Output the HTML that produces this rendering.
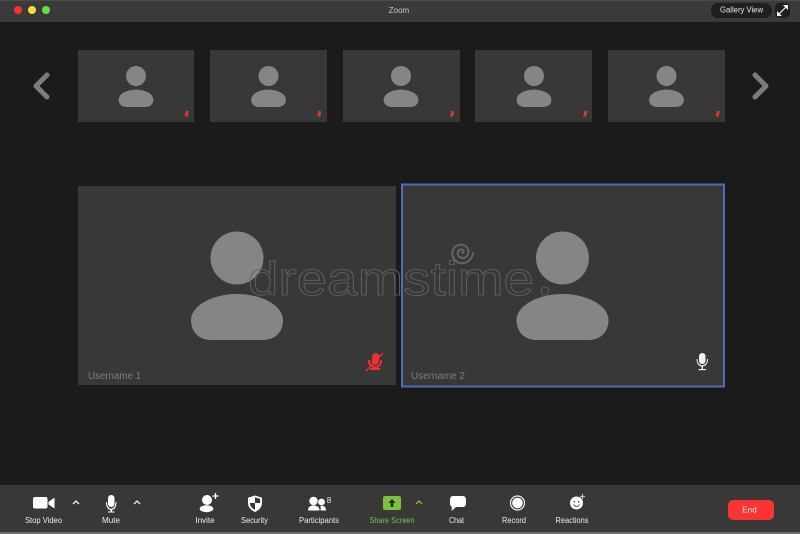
<!DOCTYPE html>
<html><head><meta charset="utf-8"><style>
html,body{margin:0;padding:0;background:#1b1b1b}
svg{display:block}
text{font-family:"Liberation Sans",sans-serif}
</style></head><body>
<svg width="800" height="534" viewBox="0 0 800 534" xmlns="http://www.w3.org/2000/svg">
<defs>
<g id="p"><circle cx="0" cy="0" r="26.5"/><path d="M-46 62C-46 48 -25 36 0 36S46 48 46 62C46 74 38 82 26 82H-26C-38 82 -46 74 -46 62Z"/></g>
</defs>
<rect width="800" height="534" fill="#1b1b1b"/>
<rect width="800" height="22" fill="#3a3a3a"/>
<rect width="800" height="1" fill="#4c4c4c"/>
<circle cx="18" cy="10" r="4" fill="#f5322d"/><circle cx="32" cy="10" r="4" fill="#f2e03a"/><circle cx="46" cy="10" r="4" fill="#62e33c"/>
<text x="399" y="13" font-size="8" fill="#c8c8c8" text-anchor="middle">Zoom</text>
<rect x="711" y="3" width="61" height="15" rx="7" fill="#1f1f1f"/>
<text x="741.5" y="12.5" font-size="8" fill="#e4e4e4" text-anchor="middle" textLength="43" lengthAdjust="spacingAndGlyphs">Gallery View</text>
<rect x="775" y="3" width="15" height="15" rx="5" fill="#1f1f1f"/>
<path d="M778.5 14.5L786.5 6.5" stroke="#f0f0f0" stroke-width="1.2" fill="none"/>
<path d="M783 5H788V10ZM777 11V16H782Z" fill="#f0f0f0"/>

<path d="M47 75L36 86L47 97" stroke="#7c7c7c" stroke-width="5" fill="none" stroke-linecap="round" stroke-linejoin="round"/>
<path d="M755 75L766 86L755 97" stroke="#7c7c7c" stroke-width="5" fill="none" stroke-linecap="round" stroke-linejoin="round"/>

<g fill="#383838">
<rect x="78" y="50" width="116" height="72"/>
<rect x="210" y="50" width="117" height="72"/>
<rect x="343" y="50" width="117" height="72"/>
<rect x="475" y="50" width="117" height="72"/>
<rect x="608" y="50" width="117" height="72"/>
</g>
<g fill="#858585">
<use href="#p" transform="translate(136 76) scale(0.378)"/>
<use href="#p" transform="translate(268.5 76) scale(0.378)"/>
<use href="#p" transform="translate(401 76) scale(0.378)"/>
<use href="#p" transform="translate(534 76) scale(0.378)"/>
<use href="#p" transform="translate(666.5 76) scale(0.378)"/>
</g>
<g stroke="#dc3434" stroke-width="3">
<path d="M187.5 111L186 116.5"/><path d="M320 111L318.5 116.5"/><path d="M453 111L451.5 116.5"/><path d="M586 111L584.5 116.5"/><path d="M718.5 111L717 116.5"/>
</g>

<rect x="78" y="186" width="318" height="199" fill="#383838"/>
<rect x="402" y="184.5" width="322" height="202" fill="#383838" stroke="#4f6db4" stroke-width="2"/>
<g fill="#858585">
<use href="#p" transform="translate(237 258)"/>
<use href="#p" transform="translate(562.5 258)"/>
</g>
<text x="88" y="379" font-size="10" fill="#7d7d7d" textLength="53" lengthAdjust="spacingAndGlyphs">Username 1</text>
<text x="411" y="379" font-size="10" fill="#7d7d7d" textLength="54" lengthAdjust="spacingAndGlyphs">Username 2</text>

<g fill="none" stroke="#646464">
<text x="248" y="295" font-size="47" textLength="286" lengthAdjust="spacingAndGlyphs" stroke-width="0.8">dreamstime</text>
<path d="M462 253C463.800 253 464.300 251 463 250C461 248.700 458 250 457.800 253C457.600 256 460 258.200 463 258C467 257.700 469 254 468.300 250.500C467.500 246.500 463.500 244 459.500 244.700C455 245.500 452 249.500 452.300 254C452.700 259.500 457 263.500 462.500 263.300C468 263 472.500 258.500 473 253" stroke-width="2" stroke-linecap="round"/>
<circle cx="545" cy="291" r="4" stroke-width="0.8"/>
</g>

<g fill="#ee3030">
<rect x="372" y="353" width="7" height="12" rx="3.5" transform="rotate(8 375 359)"/>
<path d="M368 360C368 366 371 368 375 368S382 366 382 360H380C380 364 378 366 375 366S370 364 370 360Z"/>
<rect x="370" y="368" width="10" height="2"/>
</g>
<path d="M366 371L383 353" stroke="#ee3030" stroke-width="1.3"/>
<g fill="#f0f0f0">
<rect x="699" y="353" width="6.5" height="11" rx="3.2"/>
<path d="M696.500 359C696.500 364 699 366.500 702.200 366.500S708 364 708 359H707C707 363 705 365.200 702.200 365.200S697.500 363 697.500 359Z"/>
<rect x="701.500" y="366" width="1.500" height="3"/><rect x="698.500" y="369" width="7.500" height="1.200"/>
</g>

<rect y="485" width="800" height="47" fill="#383838"/>
<rect y="532" width="800" height="2" fill="#6a6a6a"/>
<g font-size="8" fill="#ececec" text-anchor="middle">
<text x="43.500" y="523" textLength="37" lengthAdjust="spacingAndGlyphs">Stop Video</text>
<text x="111" y="523" textLength="18" lengthAdjust="spacingAndGlyphs">Mute</text>
<text x="205" y="523" textLength="19" lengthAdjust="spacingAndGlyphs">Invite</text>
<text x="254.500" y="523" textLength="27" lengthAdjust="spacingAndGlyphs">Security</text>
<text x="319" y="523" textLength="40" lengthAdjust="spacingAndGlyphs">Participants</text>
<text x="392" y="523" fill="#7cc142" textLength="45" lengthAdjust="spacingAndGlyphs">Share Screen</text>
<text x="456.500" y="523" textLength="15" lengthAdjust="spacingAndGlyphs">Chat</text>
<text x="514" y="523" textLength="24" lengthAdjust="spacingAndGlyphs">Record</text>
<text x="572" y="523" textLength="33" lengthAdjust="spacingAndGlyphs">Reactions</text>
</g>
<!-- video -->
<g fill="#fff"><rect x="33" y="497" width="14.500" height="11.500" rx="2"/><path d="M48.500 502L54.500 497.500V508.500L48.500 504.500Z"/></g>
<path d="M73 504L76 501L79 504M134 504L137 501L140 504" stroke="#f0f0f0" stroke-width="1.300" fill="none"/>
<!-- mic -->
<g fill="#fff"><rect x="108" y="495" width="6.500" height="12" rx="3.200"/>
<path d="M106 502C106 508 108.500 510 111.200 510S116.500 508 116.500 502H115.500C115.500 506.500 113.500 508.700 111.200 508.700S107 506.500 107 502Z"/>
<rect x="110.500" y="509" width="1.500" height="2.500"/><rect x="108" y="511.500" width="6.500" height="1"/></g>
<!-- invite -->
<g fill="#fff"><circle cx="207" cy="500" r="5"/><ellipse cx="206.500" cy="508.700" rx="6.800" ry="3.500"/></g>
<path d="M212.500 496H218.500M215.500 493V499" stroke="#fff" stroke-width="1.300"/>
<!-- security -->
<path d="M255 495.500L262 497.800V503C262 507.500 258.500 510.500 255 512C251.500 510.500 248 507.500 248 503V497.800Z" fill="#fff"/>
<path d="M255 503H249.800C250 506 252.500 508.800 255 510ZM255 503H260.200V499L255 497.300Z" fill="#383838"/>
<!-- participants -->
<g fill="#fff"><circle cx="313.500" cy="501" r="4.200"/><path d="M308 510.500C308 506.500 311 505.500 313.500 505.500S319.500 506.500 319.500 510.500Z"/>
<circle cx="321.500" cy="502" r="3.400"/><path d="M320.500 506C324 505.500 326 507 326 510.500H320.500C320.800 508.500 320.800 507 320.500 506Z"/></g>
<text x="329" y="503" font-size="8" fill="#ececec" text-anchor="middle">8</text>
<!-- share -->
<rect x="383" y="496" width="18" height="14" rx="2" fill="#7cc142"/>
<path d="M392 499L388.500 503H390.800V507H393.200V503H395.500Z" fill="#1e2a12"/>
<path d="M416 504L419 501L422 504" stroke="#7cc142" stroke-width="1.300" fill="none"/>
<!-- chat -->
<path d="M453 496H462.500C465 496 466 497.500 466 500V503C466 505.500 465 507 462.500 507H456L451.500 511L452 506.800C450.500 506.300 450 505 450 503V500C450 497.500 451 496 453 496Z" fill="#fff"/>
<!-- record -->
<circle cx="517.500" cy="503" r="7" fill="none" stroke="#f0f0f0" stroke-width="1.200"/><circle cx="517.500" cy="503" r="5.300" fill="#fff"/>
<!-- reactions -->
<circle cx="576.500" cy="503" r="6.500" fill="#fff"/>
<circle cx="574.300" cy="501.800" r="0.800" fill="#383838"/><circle cx="578.700" cy="501.800" r="0.800" fill="#383838"/>
<path d="M573.500 504.500C575 507 578 507 579.500 504.500" stroke="#383838" stroke-width="0.800" fill="none"/>
<path d="M580 496.500H585M582.500 494V499" stroke="#bdbdbd" stroke-width="1.200"/>
<!-- end -->
<rect x="728" y="500" width="46" height="20" rx="5" fill="#f93434"/>
<text x="749.500" y="512.500" font-size="8.200" fill="#ffe9e9" text-anchor="middle">End</text>
</svg>
</body></html>
